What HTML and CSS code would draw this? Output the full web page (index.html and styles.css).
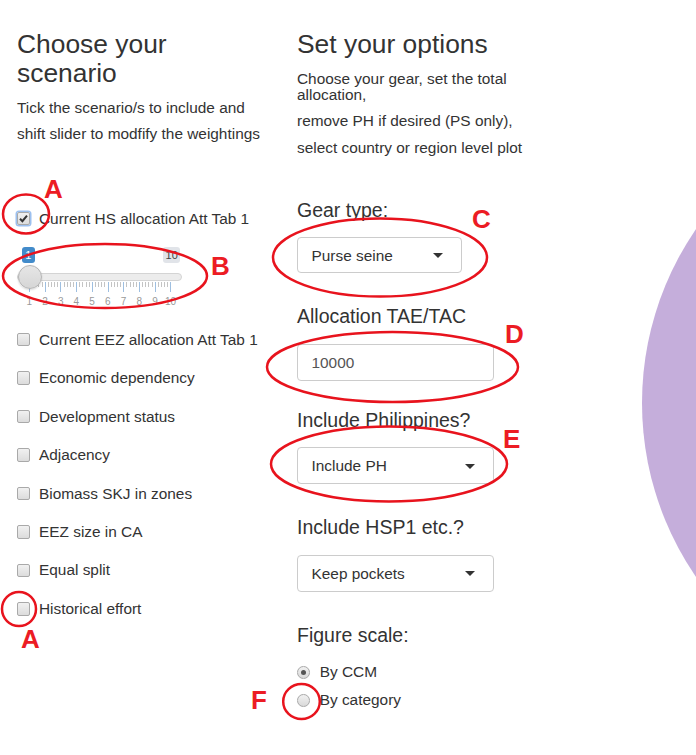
FILE: index.html
```html
<!DOCTYPE html>
<html>
<head>
<meta charset="utf-8">
<link rel="stylesheet" href="styles.css">
</head>
<body>
<div class="page">
  <div class="col col-left">
    <h3>Choose your scenario</h3>
    <div class="help">
      <p>Tick the scenario/s to include and</p>
      <p>shift slider to modfify the weightings</p>
    </div>
    <div class="checks">
      <div class="row"><span class="cb checked"><svg viewBox="0 0 13 13" width="13" height="13"><path d="M3 6.8 L5.4 9.2 L10 3.6" fill="none" stroke="#333" stroke-width="2"/></svg></span><span class="lbl">Current HS allocation Att Tab 1</span></div>
      <div class="slider">
        <div class="sl-labels"><span class="sl-from">1</span><span class="sl-to">10</span></div>
        <div class="sl-track"><span class="sl-handle"></span></div>
        <div class="sl-grid"></div>
        <div class="sl-nums"><span>1</span><span>2</span><span>3</span><span>4</span><span>5</span><span>6</span><span>7</span><span>8</span><span>9</span><span>10</span></div>
      </div>
      <div class="row"><span class="cb"></span><span class="lbl">Current EEZ allocation Att Tab 1</span></div>
      <div class="row"><span class="cb"></span><span class="lbl">Economic dependency</span></div>
      <div class="row"><span class="cb"></span><span class="lbl">Development status</span></div>
      <div class="row"><span class="cb"></span><span class="lbl">Adjacency</span></div>
      <div class="row"><span class="cb"></span><span class="lbl">Biomass SKJ in zones</span></div>
      <div class="row"><span class="cb"></span><span class="lbl">EEZ size in CA</span></div>
      <div class="row"><span class="cb"></span><span class="lbl">Equal split</span></div>
      <div class="row"><span class="cb"></span><span class="lbl">Historical effort</span></div>
    </div>
  </div>
  <div class="col col-right">
    <h3>Set your options</h3>
    <div class="help">
      <p>Choose your gear, set the total allocation,</p>
      <p>remove PH if desired (PS only),</p>
      <p>select country or region level plot</p>
    </div>
    <div class="fields">
      <div class="field">
        <div class="flabel">Gear type:</div>
        <div class="box select gear"><span>Purse seine</span><span class="caret"></span></div>
      </div>
      <div class="field num">
        <div class="flabel">Allocation TAE/TAC</div>
        <div class="box input"><span>10000</span></div>
      </div>
      <div class="field">
        <div class="flabel">Include Philippines?</div>
        <div class="box select"><span>Include PH</span><span class="caret"></span></div>
      </div>
      <div class="field">
        <div class="flabel">Include HSP1 etc.?</div>
        <div class="box select"><span>Keep pockets</span><span class="caret"></span></div>
      </div>
      <div class="field">
        <div class="flabel">Figure scale:</div>
        <div class="radios">
          <div class="rrow"><span class="rb checked"></span><span class="lbl">By CCM</span></div>
          <div class="rrow"><span class="rb"></span><span class="lbl">By category</span></div>
        </div>
      </div>
    </div>
  </div>
</div>
<div class="plot-area"><div class="plot"></div></div>
<svg class="marks" width="696" height="755" viewBox="0 0 696 755">
  <g fill="none" stroke="#e8131d" stroke-width="2.5">
    <ellipse cx="26" cy="214" rx="23" ry="19.5"/>
    <ellipse cx="105" cy="276" rx="102" ry="32"/>
    <ellipse cx="380" cy="257.5" rx="107" ry="39"/>
    <ellipse cx="392.5" cy="367" rx="125.5" ry="35"/>
    <ellipse cx="389" cy="464" rx="118" ry="37.5"/>
    <ellipse cx="19" cy="609" rx="17" ry="17"/>
    <ellipse cx="301.5" cy="701.5" rx="18.3" ry="17.5"/>
  </g>
  <g class="letters" fill="#ec1c24">
    <text x="44" y="198">A</text>
    <text x="211" y="275">B</text>
    <text x="472" y="228">C</text>
    <text x="505" y="343">D</text>
    <text x="503" y="448">E</text>
    <text x="21" y="648">A</text>
    <text x="251" y="709">F</text>
  </g>
</svg>
</body>
</html>
```

FILE: styles.css
```css
html, body {
  margin: 0;
  padding: 0;
  overflow: hidden;
}
body {
  width: 696px;
  height: 755px;
  position: relative;
  background: #fff;
  color: #333;
  font-family: "Liberation Sans", Arial, sans-serif;
}
.page {
  display: flex;
  padding-left: 17px;
}
.col-left {
  width: 248px;
  margin-right: 32px;
}
.col-right {
  width: 250px;
}
h3 {
  font-size: 26.4px;
  font-weight: 400;
  line-height: 29px;
  margin: 30px 0 0;
}
.help {
  margin-top: 11.5px;
}
.help p {
  font-size: 15.4px;
  line-height: 16px;
  margin: 0 0 10.5px;
}
.help p:last-child {
  margin-bottom: 0;
}
.col-left .help p {
  margin-bottom: 10.3px;
}

/* checkboxes */
.checks {
  margin-top: 57.6px;
}
.row {
  height: 38.47px;
  display: flex;
  align-items: center;
}
.lbl {
  font-size: 15.4px;
  line-height: 16px;
}
.cb {
  width: 11.5px;
  height: 11.5px;
  border: 1px solid #a9a9a9;
  border-radius: 2px;
  background: linear-gradient(#f1f1f1, #dcdcdc);
  margin-right: 8.8px;
  position: relative;
  flex: none;
  margin-left: -0.3px;
}
.cb.checked {
  box-shadow: 0 0 0 1.5px #9cc0ef;
}
.cb svg {
  position: absolute;
  left: -1px;
  top: -1px;
}

/* slider */
.slider {
  width: 165px;
  padding-top: 9px;
  padding-bottom: 12.6px;
}
.sl-labels {
  display: flex;
  justify-content: space-between;
  padding: 0 2px 0 4.7px;
  height: 16.6px;
  align-items: stretch;
}
.sl-labels span {
  font-size: 11px;
  line-height: 16.6px;
  border-radius: 3px;
  text-align: center;
}
.sl-from {
  width: 13.3px;
  background: #428bca;
  color: #fff;
}
.sl-to {
  width: 16.7px;
  background: #e1e4e9;
  color: #444;
}
.sl-track {
  margin-top: 10px;
  height: 7.4px;
  box-sizing: border-box;
  border: 1px solid #d4d4d4;
  border-radius: 4px;
  background: #ececec;
  position: relative;
}
.sl-handle {
  position: absolute;
  left: -0.5px;
  top: -9px;
  width: 24px;
  height: 24px;
  box-sizing: border-box;
  border-radius: 50%;
  border: 1px solid #b5b5b5;
  background: linear-gradient(#e6e6e6, #d6d6d6);
  box-shadow: 0 1px 2px rgba(0,0,0,0.15);
}
.sl-grid {
  margin-top: 1px;
  margin-left: 12.3px;
  width: 142px;
  height: 10px;
  background:
    repeating-linear-gradient(to right, #9fbfe0 0 1px, transparent 1px 15.71px) 0 0 / 100% 10px no-repeat,
    repeating-linear-gradient(to right, #c4c4c4 0 1px, transparent 1px 3.142px) 0 0 / 100% 5px no-repeat;
}
.sl-nums {
  display: flex;
  margin-top: 4px;
  margin-left: 4.45px;
}
.sl-nums span {
  width: 15.71px;
  text-align: center;
  font-size: 10px;
  line-height: 12px;
  color: #999;
  flex: none;
}

/* right fields */
.fields {
  margin-top: 43px;
}
.field {
  margin-bottom: 32px;
}
.field.num {
  margin-bottom: 28px;
}
.flabel {
  font-size: 19.5px;
  line-height: 22px;
  margin-bottom: 16.5px;
}
.box {
  width: 197px;
  height: 37px;
  box-sizing: border-box;
  border: 1px solid #cccccc;
  border-radius: 4px;
  background: #fff;
  display: flex;
  align-items: center;
  justify-content: space-between;
  padding: 1px 18px 0 13.5px;
  font-size: 15.4px;
  line-height: 16px;
}
.box.gear {
  width: 165px;
  height: 36px;
}
.box.input {
  color: #555;
}
.caret {
  width: 0;
  height: 0;
  border-left: 5px solid transparent;
  border-right: 5px solid transparent;
  border-top: 5px solid #333;
}
.radios {
  margin-top: -3.8px;
}
.rrow {
  height: 28px;
  display: flex;
  align-items: center;
}
.rb {
  width: 12.7px;
  height: 12.7px;
  box-sizing: border-box;
  border-radius: 50%;
  border: 1px solid #a9a9a9;
  background: linear-gradient(#f1f1f1, #d9d9d9);
  margin-right: 10px;
  position: relative;
  flex: none;
}
.rb.checked::after {
  content: "";
  position: absolute;
  left: 2.85px;
  top: 2.85px;
  width: 5px;
  height: 5px;
  border-radius: 50%;
  background: #555;
}

/* plot circle (clipped at the window edge) */
.plot-area {
  position: absolute;
  left: 642px;
  top: 96px;
  width: 54px;
  height: 614px;
  overflow: hidden;
}
.plot {
  width: 614px;
  height: 614px;
  border-radius: 50%;
  background: #c5aedb;
}

/* annotations */
.marks {
  position: absolute;
  left: 0;
  top: 0;
  pointer-events: none;
}
.letters text {
  font-family: "Liberation Sans", Arial, sans-serif;
  font-weight: 700;
  font-size: 26px;
}
```
